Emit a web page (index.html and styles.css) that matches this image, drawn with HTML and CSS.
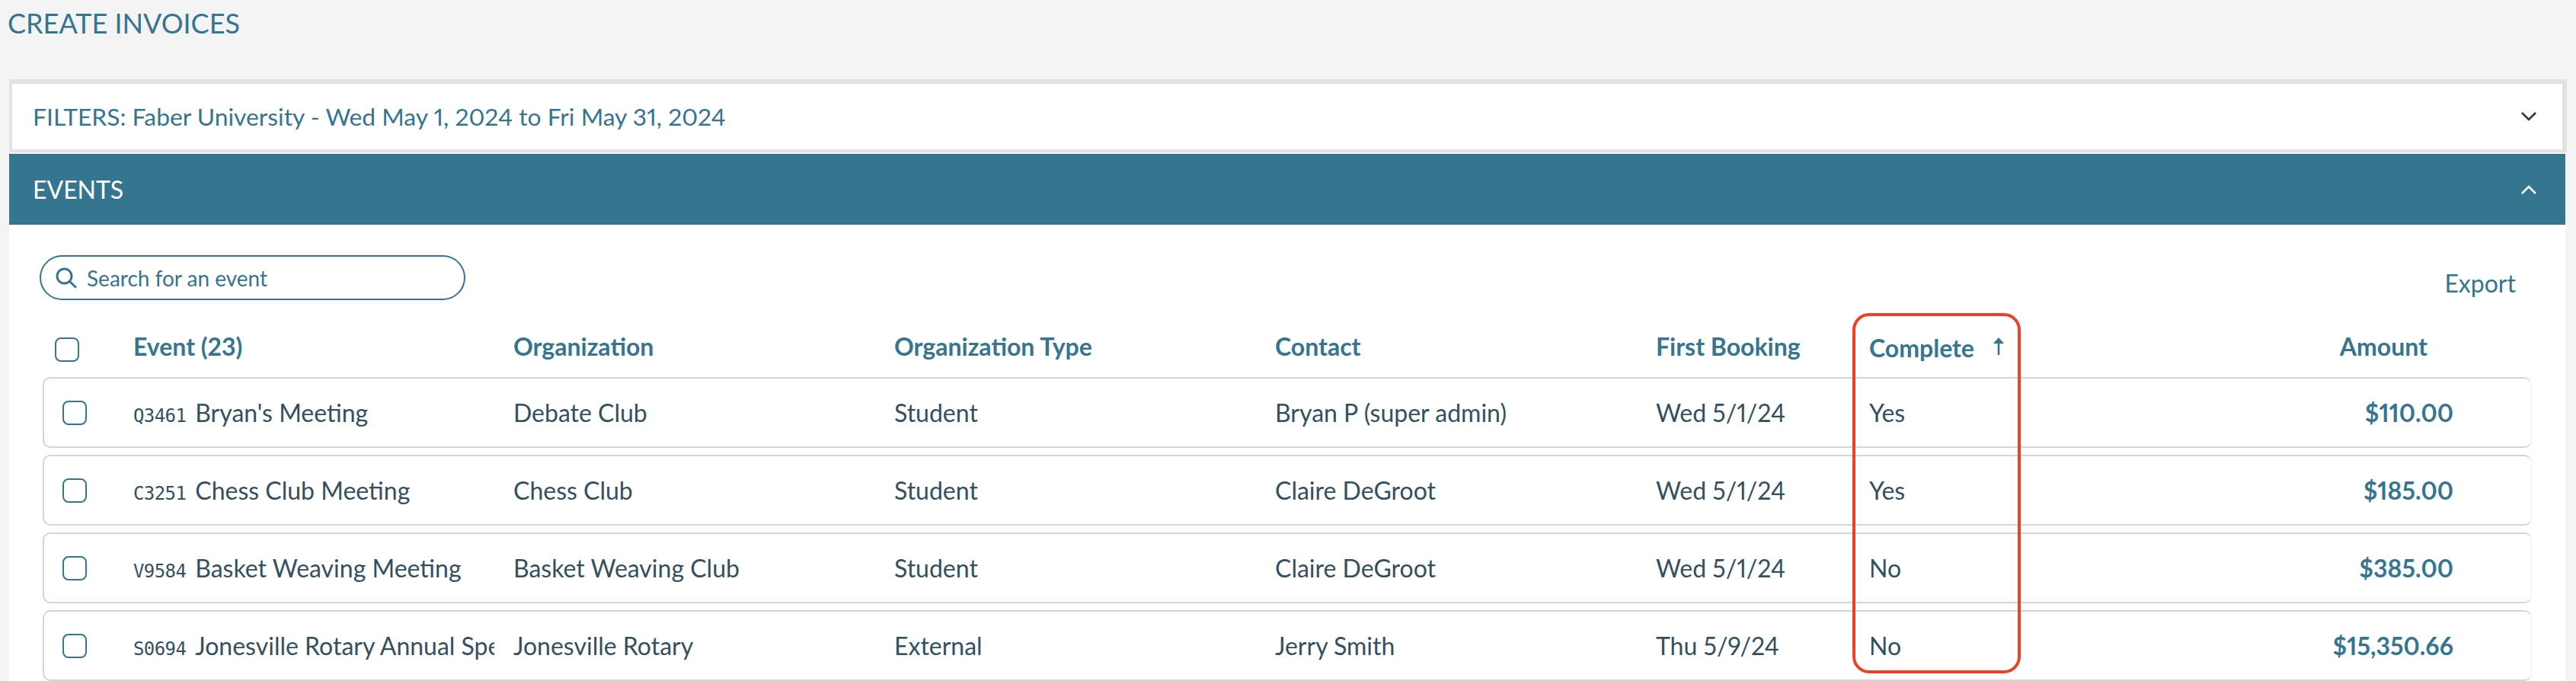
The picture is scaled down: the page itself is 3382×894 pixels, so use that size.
FILE: index.html
```html
<!DOCTYPE html>
<html lang="en">
<head>
    <meta charset="UTF-8">
    <title>Create Invoices</title>
    <link rel="stylesheet" href="styles.css">
</head>
<body>
    <h1 class="page-title">CREATE INVOICES</h1>

    <div class="filters">
        <span>FILTERS: Faber University - Wed May 1, 2024 to Fri May 31, 2024</span>
        <svg class="chevron" width="22" height="14" viewBox="0 0 22 14"><path d="M2 2l9 9 9-9" fill="none" stroke="#333" stroke-width="2.6"/></svg>
    </div>

    <div class="events">
        <div class="events-bar">
            <span>EVENTS</span>
            <svg class="chevron" width="22" height="14" viewBox="0 0 22 14"><path d="M2 12l9-9 9 9" fill="none" stroke="#fff" stroke-width="2.6"/></svg>
        </div>

        <div class="events-body">
            <div class="toolbar">
                <div class="search">
                    <svg width="30" height="30" viewBox="0 0 30 30"><circle cx="12.5" cy="12.5" r="9.5" fill="none" stroke="#357590" stroke-width="3"/><path d="M19.5 19.5l8.500 8" fill="none" stroke="#357590" stroke-width="3"/></svg>
                    <span>Search for an event</span>
                </div>
                <a class="export">Export</a>
            </div>

            <div class="table-head">
                <span class="checkbox"></span>
                <span>Event (23)</span>
                <span>Organization</span>
                <span>Organization Type</span>
                <span>Contact</span>
                <span>First Booking</span>
                <span class="sorted">Complete
                    <svg width="16" height="23" viewBox="0 0 16 23"><path d="M8 0l7 8H9.300v15H6.700V8H1z" fill="#357590"/></svg>
                </span>
                <span class="amount">Amount</span>
            </div>

            <div class="row">
                <span class="checkbox"></span>
                <span class="event"><code>Q3461</code>Bryan's Meeting</span>
                <span>Debate Club</span>
                <span>Student</span>
                <span>Bryan P (super admin)</span>
                <span>Wed 5/1/24</span>
                <span>Yes</span>
                <span class="amount">$110.00</span>
            </div>
            <div class="row">
                <span class="checkbox"></span>
                <span class="event"><code>C3251</code>Chess Club Meeting</span>
                <span>Chess Club</span>
                <span>Student</span>
                <span>Claire DeGroot</span>
                <span>Wed 5/1/24</span>
                <span>Yes</span>
                <span class="amount">$185.00</span>
            </div>
            <div class="row">
                <span class="checkbox"></span>
                <span class="event"><code>V9584</code>Basket Weaving Meeting</span>
                <span>Basket Weaving Club</span>
                <span>Student</span>
                <span>Claire DeGroot</span>
                <span>Wed 5/1/24</span>
                <span>No</span>
                <span class="amount">$385.00</span>
            </div>
            <div class="row">
                <span class="checkbox"></span>
                <span class="event"><code>S0694</code>Jonesville Rotary Annual Spe</span>
                <span>Jonesville Rotary</span>
                <span>External</span>
                <span>Jerry Smith</span>
                <span>Thu 5/9/24</span>
                <span>No</span>
                <span class="amount">$15,350.66</span>
            </div>
        </div>
    </div>

    <div class="highlight"></div>
</body>
</html>
```

FILE: styles.css
```css
html, body {
    height: 894px;
    overflow: hidden;
}
body {
    margin: 0;
    padding: 0 14px 0 12px;
    background-color: #f4f4f4;
    font-family: Lato, sans-serif;
    font-variant-numeric: proportional-nums;
    color: #34505f;
    position: relative;
}
.page-title {
    margin: 0;
    height: 104px;
    padding: 8px 0 0 0;
    box-sizing: border-box;
    margin-left: -2px;
    font-size: 36px;
    line-height: 44px;
    font-weight: 400;
    color: #357590;
}
.filters {
    height: 96px;
    box-sizing: border-box;
    margin-right: -2px;
    margin-bottom: 2px;
    padding: 0 33px 0 27px;
    display: flex;
    align-items: center;
    justify-content: space-between;
    background-color: white;
    border: solid #e2e2e2;
    border-width: 6px 6px 4px 4px;
    font-size: 31.8px;
    color: #357590;
}
.events {
    background-color: white;
    height: 692px;
}
.events-bar {
    height: 93px;
    padding: 0 37px 0 31px;
    display: flex;
    align-items: center;
    justify-content: space-between;
    background-color: #357590;
    color: white;
    font-size: 32px;
}
.events-body {
    padding: 40px 0 0 40px;
}
.toolbar {
    height: 59px;
    display: flex;
    justify-content: space-between;
    align-items: center;
}
.search {
    width: 559px;
    height: 59px;
    box-sizing: border-box;
    padding-left: 18px;
    display: flex;
    align-items: center;
    gap: 12px;
    border: 2px solid #357590;
    border-radius: 30px;
    font-size: 28px;
    color: #357590;
}
.export {
    margin: 0 65px 0 0;
    position: relative;
    top: 7px;
    font-size: 32px;
    color: #357590;
}
.checkbox {
    display: block;
    width: 32px;
    height: 32px;
    box-sizing: border-box;
    border: 2px solid #357590;
    border-radius: 8px;
}
.table-head, .row {
    display: grid;
    font-size: 32px;
}
.table-head {
    height: 52px;
    margin-top: 49px;
    padding: 0 181px 0 20px;
    box-sizing: border-box;
    grid-template-columns: 103px 499px 500px 500px 500px 280px 1fr auto;
    align-items: start;
    line-height: 24px;
    font-weight: 700;
    color: #357590;
}
.sorted svg {
    margin-left: 16px;
    vertical-align: 3px;
}
.row {
    height: 93px;
    box-sizing: border-box;
    width: 3268px;
    margin: 0 0 9px 4px;
    padding: 0 102px 0 24px;
    grid-template-columns: 93px 499px 500px 500px 500px 280px 1fr auto;
    align-items: center;
    background-color: white;
    border: 2px solid #d4d4d4;
    border-right: 1px solid #eee;
    border-radius: 10px;
}
.row .amount {
    font-weight: 700;
    color: #357590;
}
.event {
    white-space: nowrap;
    overflow: hidden;
    width: 474px;
}
code {
    font-family: "DejaVu Sans Mono", monospace;
    font-size: 24px;
    letter-spacing: -0.6px;
    margin-right: 12px;
}
.highlight {
    position: absolute;
    left: 2432px;
    top: 411px;
    width: 221px;
    height: 473px;
    box-sizing: border-box;
    border: 4px solid #ee4024;
    border-radius: 22px;
}
```
